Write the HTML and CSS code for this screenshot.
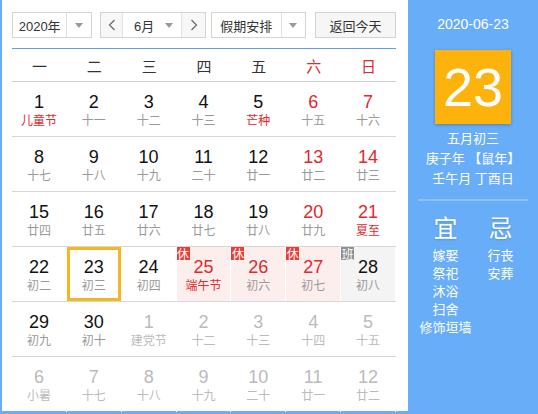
FILE: index.html
```html
<!DOCTYPE html>
<html lang="zh-CN">
<head>
<meta charset="utf-8">
<title>万年历</title>
<link rel="stylesheet" href="styles.css">
</head>
<body>
<div class="cal">
  <div class="main">
    <div class="toolbar">
      <div class="sel year"><span class="txt">2020年</span><span class="arr"><i class="tri"></i></span></div>
      <div class="month-group">
        <span class="nav prev"><svg width="8" height="12" viewBox="0 0 8 12"><path d="M6.5 1 1.5 6 6.5 11" fill="none" stroke="#666" stroke-width="1.2"/></svg></span>
        <span class="mtxt">6月<i class="tri"></i></span>
        <span class="nav next"><svg width="8" height="12" viewBox="0 0 8 12"><path d="M1.5 1 6.5 6 1.5 11" fill="none" stroke="#666" stroke-width="1.2"/></svg></span>
      </div>
      <div class="sel holiday"><span class="txt">假期安排</span><span class="arr"><i class="tri"></i></span></div>
      <div class="btn">返回今天</div>
    </div>
    <div class="week">
      <span>一</span><span>二</span><span>三</span><span>四</span><span>五</span><span class="red">六</span><span class="red">日</span>
    </div>
    <div class="row">
      <div class="cell"><b>1</b><em class="red">儿童节</em></div>
      <div class="cell"><b>2</b><em>十一</em></div>
      <div class="cell"><b>3</b><em>十二</em></div>
      <div class="cell"><b>4</b><em>十三</em></div>
      <div class="cell"><b>5</b><em class="red">芒种</em></div>
      <div class="cell"><b class="red">6</b><em>十五</em></div>
      <div class="cell"><b class="red">7</b><em>十六</em></div>
    </div>
    <div class="row">
      <div class="cell"><b>8</b><em>十七</em></div>
      <div class="cell"><b>9</b><em>十八</em></div>
      <div class="cell"><b>10</b><em>十九</em></div>
      <div class="cell"><b>11</b><em>二十</em></div>
      <div class="cell"><b>12</b><em>廿一</em></div>
      <div class="cell"><b class="red">13</b><em>廿二</em></div>
      <div class="cell"><b class="red">14</b><em>廿三</em></div>
    </div>
    <div class="row">
      <div class="cell"><b>15</b><em>廿四</em></div>
      <div class="cell"><b>16</b><em>廿五</em></div>
      <div class="cell"><b>17</b><em>廿六</em></div>
      <div class="cell"><b>18</b><em>廿七</em></div>
      <div class="cell"><b>19</b><em>廿八</em></div>
      <div class="cell"><b class="red">20</b><em>廿九</em></div>
      <div class="cell"><b class="red">21</b><em class="red">夏至</em></div>
    </div>
    <div class="row">
      <div class="cell"><b>22</b><em>初二</em></div>
      <div class="cell today"><b>23</b><em>初三</em></div>
      <div class="cell"><b>24</b><em>初四</em></div>
      <div class="cell rest"><span class="badge">休</span><b class="red">25</b><em class="red">端午节</em></div>
      <div class="cell rest"><span class="badge">休</span><b class="red">26</b><em>初六</em></div>
      <div class="cell rest"><span class="badge">休</span><b class="red">27</b><em>初七</em></div>
      <div class="cell work"><span class="badge gray">班</span><b>28</b><em>初八</em></div>
    </div>
    <div class="row">
      <div class="cell"><b>29</b><em>初九</em></div>
      <div class="cell"><b>30</b><em>初十</em></div>
      <div class="cell other"><b>1</b><em>建党节</em></div>
      <div class="cell other"><b>2</b><em>十二</em></div>
      <div class="cell other"><b>3</b><em>十三</em></div>
      <div class="cell other"><b>4</b><em>十四</em></div>
      <div class="cell other"><b>5</b><em>十五</em></div>
    </div>
    <div class="row last">
      <div class="cell other"><b>6</b><em>小暑</em></div>
      <div class="cell other"><b>7</b><em>十七</em></div>
      <div class="cell other"><b>8</b><em>十八</em></div>
      <div class="cell other"><b>9</b><em>十九</em></div>
      <div class="cell other"><b>10</b><em>二十</em></div>
      <div class="cell other"><b>11</b><em>廿一</em></div>
      <div class="cell other"><b>12</b><em>廿二</em></div>
    </div>
  </div>
  <div class="side">
    <div class="date">2020-06-23</div>
    <div class="bigday">23</div>
    <div class="lunar">
      <div>五月初三</div>
      <div>庚子年 【鼠年】</div>
      <div>壬午月 丁酉日</div>
    </div>
    <div class="sep"></div>
    <div class="yiji">
      <div class="col">
        <div class="head">宜</div>
        <div>嫁娶</div><div>祭祀</div><div>沐浴</div><div>扫舍</div><div>修饰垣墙</div>
      </div>
      <div class="col">
        <div class="head">忌</div>
        <div>行丧</div><div>安葬</div>
      </div>
    </div>
  </div>
</div>
</body>
</html>
```
FILE: styles.css
```css
* { box-sizing: border-box; }
html, body { margin: 0; padding: 0; }
body {
  font-family: "Liberation Sans", "Noto Sans CJK SC", sans-serif;
  color: #333;
  background: #fff;
}
.cal {
  display: flex;
  width: 538px;
  height: 414px;
  overflow: hidden;
}
.main {
  width: 408px;
  height: 414px;
  border-left: 2px solid #67adf7;
  border-bottom: 3px solid #67adf7;
  padding: 12px 12px 0 10px;
  background: #fff;
}
.toolbar {
  display: flex;
  align-items: center;
  height: 26px;
  font-size: 13px;
  color: #333;
}
.sel {
  display: flex;
  height: 26px;
  border: 1px solid #d4d4d4;
  background: #fff;
}
.sel .txt {
  display: flex;
  align-items: center;
  justify-content: center;
  border-right: 1px solid #e2e2e2;
}
.sel .arr {
  display: flex;
  align-items: center;
  justify-content: center;
  width: 24px;
}
.tri {
  display: inline-block;
  width: 0;
  height: 0;
  border-left: 4px solid transparent;
  border-right: 4px solid transparent;
  border-top: 5px solid #999;
}
.year { width: 80px; }
.year .txt { width: 55px; }
.month-group {
  display: flex;
  height: 26px;
  margin-left: 8px;
  border: 1px solid #d4d4d4;
  width: 106px;
}
.nav {
  display: flex;
  align-items: center;
  justify-content: center;
  background: #f7f7f7;
  width: 22px;
}
.nav.next { width: 24px; border-left: 1px solid #e2e2e2; }
.nav.prev { border-right: 1px solid #e2e2e2; }
.mtxt {
  flex: 1;
  display: flex;
  align-items: center;
  justify-content: space-between;
  padding: 0 8px 0 11px;
  background: #fff;
}
.holiday { margin-left: 5px; width: 95px; }
.holiday .txt { width: 71px; }
.btn {
  margin-left: 9px;
  width: 81px;
  height: 26px;
  display: flex;
  align-items: center;
  justify-content: center;
  border: 1px solid #d4d4d4;
  background: #f6f6f6;
}
.week {
  display: grid;
  grid-template-columns: repeat(7, 1fr);
  margin-top: 10px;
  height: 34px;
  border-top: 1px solid #5f9fe6;
  border-bottom: 1px solid #d0d0d0;
  align-items: center;
  text-align: center;
  font-size: 15px;
  color: #333;
}
.red { color: #e0292c !important; }
.row {
  display: grid;
  grid-template-columns: repeat(7, 1fr);
  height: 55px;
  border-bottom: 1px solid #d6d6d6;
}
.row.last { border-bottom: none; }
.cell {
  position: relative;
  display: flex;
  flex-direction: column;
  align-items: center;
  padding-top: 10px;
  border-right: 1px solid #fff;
}
.cell b {
  font-weight: normal;
  font-size: 18px;
  line-height: 21px;
  color: #111;
}
.cell em {
  font-style: normal;
  font-size: 12px;
  line-height: 17px;
  color: #999;
}
.cell.other b, .cell.other em { color: #bbb; }
.cell.rest { background: #fdeeee; }
.cell.work { background: #f4f4f4; }
.cell.today {
  box-shadow: inset 0 0 0 3px #f6b523;
}
.badge {
  position: absolute;
  top: 0;
  left: 0;
  width: 13px;
  height: 13px;
  background: #ec3a35;
  color: #fff;
  font-size: 12px;
  line-height: 13px;
  text-align: center;
  font-family: "Noto Sans CJK SC", sans-serif;
}
.badge.gray { background: #8f8f8f; }
.side {
  width: 130px;
  height: 414px;
  background: #67adf7;
  color: #fff;
  display: flex;
  flex-direction: column;
  align-items: center;
  padding: 15px 10px 0;
}
.date {
  font-size: 14px;
  line-height: 18px;
}
.bigday {
  margin-top: 17px;
  width: 76px;
  height: 74px;
  background: #fdb20c;
  box-shadow: 0 1px 3px rgba(0, 0, 0, 0.25);
  font-size: 54px;
  line-height: 74px;
  text-align: center;
  color: #fff;
}
.lunar {
  margin-top: 5px;
  font-size: 13px;
  line-height: 20px;
  text-align: center;
}
.sep {
  margin-top: 10px;
  width: 110px;
  height: 2px;
  background: #8cc4fa;
}
.yiji {
  display: flex;
  width: 110px;
  margin-top: 13px;
  font-size: 13px;
  line-height: 18px;
}
.yiji .col {
  width: 56px;
  display: flex;
  flex-direction: column;
  align-items: center;
  white-space: nowrap;
}
.yiji .head {
  font-size: 24px;
  line-height: 30px;
  margin-bottom: 3px;
  text-shadow: 0 1px 2px rgba(0, 0, 0, 0.15);
}
```
